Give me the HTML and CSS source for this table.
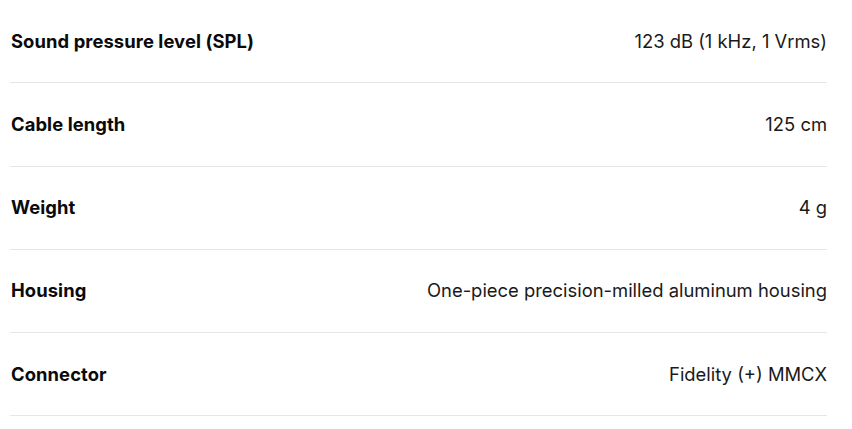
FILE: index.html
```html
<!DOCTYPE html>
<html>
<head>
<meta charset="utf-8">
<link rel="stylesheet" href="styles.css">
</head>
<body>
<div class="specs">
  <div class="row"><div class="label">Sound pressure level (SPL)</div><div class="value">123 dB (1 kHz, 1 Vrms)</div></div>
  <div class="row"><div class="label">Cable length</div><div class="value">125 cm</div></div>
  <div class="row"><div class="label">Weight</div><div class="value">4 g</div></div>
  <div class="row"><div class="label">Housing</div><div class="value">One-piece precision-milled aluminum housing</div></div>
  <div class="row"><div class="label">Connector</div><div class="value">Fidelity (+) MMCX</div></div>
</div>
</body>
</html>
```
FILE: styles.css
```css
html, body { margin: 0; padding: 0; background: #fff; }
body { font-family: Inter, "Noto Sans", sans-serif; }
.specs { width: 817px; margin-left: 10px; }
.row {
  display: flex;
  justify-content: space-between;
  align-items: center;
  padding: 28.625px 0 29.625px;
  line-height: 24px;
  border-bottom: 1px solid #e6e6e6;
}
.label { font-size: 18.4px; font-weight: 700; color: #0a0a0a; padding-left: 1px; letter-spacing: 0.08px; }
.value { font-size: 18.4px; font-weight: 400; color: #1a1a1a; }
```
